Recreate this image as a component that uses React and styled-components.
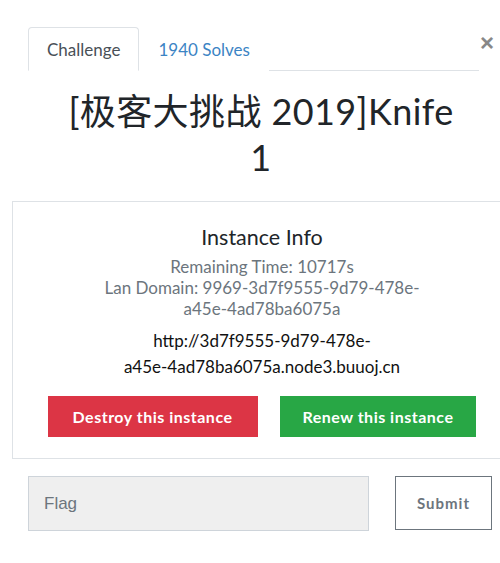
import React from 'react'
import styled, { createGlobalStyle } from 'styled-components'

const GlobalStyle = createGlobalStyle`
  html, body {
    margin: 0;
    padding: 0;
    background: #fff;
    overflow: hidden;
  }
  body {
    font-family: Lato, "Noto Sans CJK SC", sans-serif;
    color: #212529;
  }
`

const Modal = styled.div`
  width: 522px;
  padding-top: 27px;
`

const Header = styled.div`
  display: flex;
  align-items: flex-start;
  padding-left: 28px;
`

const TabList = styled.ul`
  display: flex;
  width: 451px;
  margin: 0;
  padding: 0;
  list-style: none;
  border-bottom: 1px solid #dee2e6;
`

const Tab = styled.li`
  box-sizing: border-box;
  height: 44px;
  padding: 0 18px;
  display: flex;
  align-items: center;
  font-size: 17px;
  margin-bottom: -1px;
  border: 1px solid ${p => (p.active ? '#dee2e6' : 'transparent')};
  border-bottom-color: ${p => (p.active ? '#fff' : 'transparent')};
  border-radius: 4px 4px 0 0;
  background: #fff;
  color: ${p => (p.active ? '#495057' : '#3b84c4')};
`

const Close = styled.button`
  border: 0;
  background: none;
  padding: 0;
  margin: 6px 0 0 1px;
  font-family: "Liberation Sans", Arial, sans-serif;
  font-size: 24px;
  font-weight: 700;
  line-height: 20px;
  color: #888;
  cursor: pointer;
`

const Title = styled.h3`
  width: 396px;
  margin: 17px auto 21px;
  text-align: center;
  font-family: Lato, "Noto Sans CJK SC", sans-serif;
  font-weight: 400;
  font-size: 36px;
  line-height: 46px;
  letter-spacing: 0.4px;
  color: #212529;
`

const InfoBox = styled.div`
  margin-left: 12px;
  width: 498px;
  border: 1px solid #dee2e6;
  padding: 23px 0 21px;
  text-align: center;
`

const InfoTitle = styled.h5`
  margin: 0 0 7px;
  font-size: 21.5px;
  line-height: 24px;
  font-weight: 400;
  color: #212529;
`

const Muted = styled.div`
  font-size: 17px;
  line-height: 21px;
  color: #6c757d;
  margin: 0 auto;
  width: ${p => (p.narrow ? '330px' : 'auto')};
`

const Url = styled.div`
  margin: 9px auto 0;
  font-size: 17px;
  line-height: 26px;
  color: #111;
`

const Actions = styled.div`
  display: flex;
  justify-content: center;
  gap: 22px;
  margin-top: 16px;
`

const ActionButton = styled.button`
  height: 41px;
  padding: 0 ${p => (p.variant === 'danger' ? '25px' : '23px')};
  border: 0;
  border-radius: 0;
  font-family: Lato, sans-serif;
  font-weight: 700;
  font-size: 16px;
  letter-spacing: 0.5px;
  color: #fff;
  background: ${p => (p.variant === 'danger' ? '#dc3545' : '#28a745')};
`

const FlagRow = styled.form`
  display: flex;
  gap: 26px;
  margin: 17px 0 0 28px;
`

const FlagInput = styled.input`
  width: 341px;
  height: 55px;
  box-sizing: border-box;
  padding: 0 15px;
  border: 1px solid #ced4da;
  background: #efefef;
  font-family: "Liberation Sans", Arial, sans-serif;
  font-size: 17px;
  color: #495057;
  outline: none;
  &::placeholder {
    color: #6c757d;
  }
`

const SubmitButton = styled.button`
  width: 97px;
  height: 54px;
  border: 1px solid #6c757d;
  border-radius: 0;
  background: #fff;
  font-family: Lato, sans-serif;
  font-weight: 700;
  font-size: 15px;
  letter-spacing: 1px;
  color: #6c757d;
`

export default function App() {
  return (
    <Modal>
      <GlobalStyle />
      <Header>
        <TabList>
          <Tab active>Challenge</Tab>
          <Tab>1940 Solves</Tab>
        </TabList>
        <Close aria-label="Close">×</Close>
      </Header>
      <Title>[极客大挑战 2019]Knife 1</Title>
      <InfoBox>
        <InfoTitle>Instance Info</InfoTitle>
        <Muted>Remaining Time: 10717s</Muted>
        <Muted narrow>Lan Domain: 9969-3d7f9555-9d79-478e-a45e-4ad78ba6075a</Muted>
        <Url>
          http://3d7f9555-9d79-478e-
          <br />
          a45e-4ad78ba6075a.node3.buuoj.cn
        </Url>
        <Actions>
          <ActionButton variant="danger">Destroy this instance</ActionButton>
          <ActionButton variant="success">Renew this instance</ActionButton>
        </Actions>
      </InfoBox>
      <FlagRow onSubmit={e => e.preventDefault()}>
        <FlagInput placeholder="Flag" />
        <SubmitButton type="submit">Submit</SubmitButton>
      </FlagRow>
    </Modal>
  )
}
